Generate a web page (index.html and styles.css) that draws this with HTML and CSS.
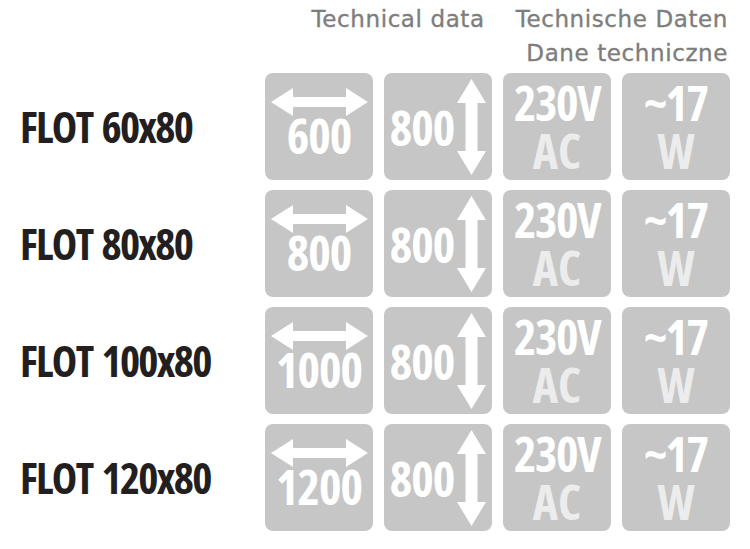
FILE: index.html
```html
<!DOCTYPE html>
<html lang="en">
<head>
<meta charset="utf-8">
<title>FLOT technical data</title>
<link rel="stylesheet" href="styles.css">
</head>
<body>
<div class="page">
  <header class="head">
    <div class="head-item">Technical data</div>
    <div class="head-item">Technische Daten<br>Dane techniczne</div>
  </header>
  <div class="grid">
    <div class="name">FLOT 60x80</div>
    <div class="tile tile-w"><svg class="arr-h" viewBox="0 0 97 28"><polygon points="0,14 22,0 22,9 75,9 75,0 97,14 75,28 75,19 22,19 22,28"/></svg><span class="num">600</span></div>
    <div class="tile tile-h"><span class="num">800</span><svg class="arr-v" viewBox="0 0 29 96"><polygon points="14.5,0 29,24 20.5,24 20.5,72 29,72 14.5,96 0,72 8.5,72 8.5,24 0,24"/></svg></div>
    <div class="tile tile-t"><span class="big">230V</span><span class="sub">AC</span></div>
    <div class="tile tile-t"><span class="big">~17</span><span class="sub">W</span></div>

    <div class="name">FLOT 80x80</div>
    <div class="tile tile-w"><svg class="arr-h" viewBox="0 0 97 28"><polygon points="0,14 22,0 22,9 75,9 75,0 97,14 75,28 75,19 22,19 22,28"/></svg><span class="num">800</span></div>
    <div class="tile tile-h"><span class="num">800</span><svg class="arr-v" viewBox="0 0 29 96"><polygon points="14.5,0 29,24 20.5,24 20.5,72 29,72 14.5,96 0,72 8.5,72 8.5,24 0,24"/></svg></div>
    <div class="tile tile-t"><span class="big">230V</span><span class="sub">AC</span></div>
    <div class="tile tile-t"><span class="big">~17</span><span class="sub">W</span></div>

    <div class="name">FLOT 100x80</div>
    <div class="tile tile-w"><svg class="arr-h" viewBox="0 0 97 28"><polygon points="0,14 22,0 22,9 75,9 75,0 97,14 75,28 75,19 22,19 22,28"/></svg><span class="num">1000</span></div>
    <div class="tile tile-h"><span class="num">800</span><svg class="arr-v" viewBox="0 0 29 96"><polygon points="14.5,0 29,24 20.5,24 20.5,72 29,72 14.5,96 0,72 8.5,72 8.5,24 0,24"/></svg></div>
    <div class="tile tile-t"><span class="big">230V</span><span class="sub">AC</span></div>
    <div class="tile tile-t"><span class="big">~17</span><span class="sub">W</span></div>

    <div class="name">FLOT 120x80</div>
    <div class="tile tile-w"><svg class="arr-h" viewBox="0 0 97 28"><polygon points="0,14 22,0 22,9 75,9 75,0 97,14 75,28 75,19 22,19 22,28"/></svg><span class="num">1200</span></div>
    <div class="tile tile-h"><span class="num">800</span><svg class="arr-v" viewBox="0 0 29 96"><polygon points="14.5,0 29,24 20.5,24 20.5,72 29,72 14.5,96 0,72 8.5,72 8.5,24 0,24"/></svg></div>
    <div class="tile tile-t"><span class="big">230V</span><span class="sub">AC</span></div>
    <div class="tile tile-t"><span class="big">~17</span><span class="sub">W</span></div>
  </div>
</div>
</body>
</html>
```
FILE: styles.css
```css
html, body {
  margin: 0;
  padding: 0;
  background: #ffffff;
}

.page {
  width: 750px;
  height: 549px;
  overflow: hidden;
}

.head {
  box-sizing: border-box;
  height: 73px;
  padding: 2px 22px 0 0;
  display: flex;
  justify-content: flex-end;
  gap: 31px;
  font-family: "DejaVu Sans", sans-serif;
  font-size: 23px;
  line-height: 34px;
  letter-spacing: 0.6px;
  color: #7d7d7d;
  -webkit-text-stroke: 0.35px #7d7d7d;
}

.head-item {
  text-align: right;
}

.grid {
  display: grid;
  grid-template-columns: 254px 108px 108px 108px 108px;
  grid-auto-rows: 107px;
  column-gap: 11px;
  row-gap: 10px;
}

.name {
  align-self: center;
  padding-left: 20px;
  font-family: "Open Sans", sans-serif;
  font-stretch: 75%;
  font-weight: 700;
  font-size: 43px;
  line-height: 50px;
  letter-spacing: -1.7px;
  word-spacing: 3px;
  color: #231f20;
  white-space: nowrap;
}

.tile {
  background: #c6c6c6;
  border-radius: 8px;
  color: #ffffff;
  font-family: "Open Sans", sans-serif;
  font-stretch: 75%;
  font-weight: 700;
  font-size: 48px;
  display: flex;
}

.tile-w {
  flex-direction: column;
  align-items: center;
}

.arr-h {
  display: block;
  width: 97px;
  height: 28px;
  margin-top: 15px;
  fill: #ffffff;
}

.tile-w .num {
  line-height: 40px;
  letter-spacing: -1px;
}

.tile-h {
  align-items: center;
  justify-content: center;
  gap: 3px;
}

.tile-h .num {
  line-height: 48px;
  margin-top: 2px;
  letter-spacing: -1px;
}

.arr-v {
  display: block;
  width: 29px;
  height: 96px;
  fill: #ffffff;
}

.tile-t {
  flex-direction: column;
  align-items: center;
  padding-top: 6px;
  line-height: 48px;
}

.tile-t .big {
  letter-spacing: -1.5px;
}

.tile-t .sub {
  color: #ececec;
}
```
